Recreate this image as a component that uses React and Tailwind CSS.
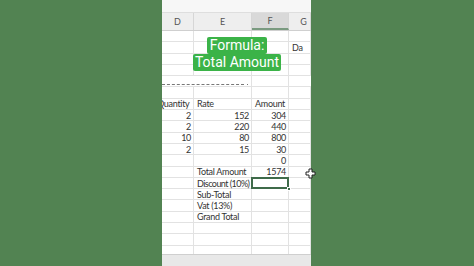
import React from "react";

const cols = [
  { key: "D", w: "w-[32px]" },
  { key: "E", w: "w-[58px]" },
  { key: "F", w: "w-[37px]" },
  { key: "G", w: "w-[22px]" },
];

// each row: [D, E, F, G] with alignment info
const rows = [
  [null, null, null, null],
  [null, null, null, { t: "Da", a: "left" }],
  [null, null, null, null],
  [null, null, null, null],
  "dashed",
  [null, null, null, null],
  [{ t: "Quantity", a: "cut" }, { t: "Rate", a: "left" }, { t: "Amount", a: "left" }, null],
  [{ t: "2" }, { t: "152" }, { t: "304" }, null],
  [{ t: "2" }, { t: "220" }, { t: "440" }, null],
  [{ t: "10" }, { t: "80" }, { t: "800" }, null],
  [{ t: "2" }, { t: "15" }, { t: "30" }, null],
  [null, null, { t: "0" }, null],
  [null, { t: "Total Amount", a: "left" }, { t: "1574" }, null],
  [null, { t: "Discount (10%)", a: "tight" }, "selected", null],
  [null, { t: "Sub-Total", a: "left" }, null, null],
  [null, { t: "Vat (13%)", a: "left" }, null, null],
  [null, { t: "Grand Total", a: "left" }, null, null],
  [null, null, null, null],
  [null, null, null, null],
  [null, null, null, null],
  [null, null, null, null],
];

function Cell({ col, value }) {
  if (value === "selected") {
    return (
      <div className={`${col.w} relative h-full shrink-0 border-r border-[#e2e2e2]`}>
        <div className="absolute -left-px -top-px right-[-1px] bottom-[-1px] border-2 border-[#3f6b4a]" />
        <div className="absolute right-[-3px] bottom-[-3px] h-[4px] w-[4px] bg-[#3f6b4a] border border-white" />
      </div>
    );
  }
  let cls = "justify-end pr-[2px]";
  if (value && value.a === "left") cls = "justify-start pl-[3px]";
  if (value && value.a === "tight") cls = "justify-start pl-[3px] tracking-[-0.55px]";
  if (value && value.a === "cut") cls = "justify-start";
  return (
    <div className={`${col.w} flex h-full shrink-0 items-center whitespace-nowrap border-r border-[#e2e2e2] ${cls}`}>
      {value && value.a === "cut" ? <span className="ml-[-5px]">{value.t}</span> : value ? value.t : ""}
    </div>
  );
}

export default function App() {
  return (
    <div className="relative flex h-[266px] w-[474px] overflow-hidden bg-[#528352] pl-[162px]" style={{ fontFamily: "Lato, 'Open Sans', sans-serif" }}>
      <div className="flex h-full w-[149px] flex-col overflow-hidden bg-white">
        <div className="h-[13px] shrink-0 border-b border-[#dedede] bg-[#f7f7f7]" />
        <div className="flex h-[18px] shrink-0 border-b border-[#cfcfcf] bg-[#eeeeee] text-[9px] text-[#555]">
          {cols.map((c) => (
            <div
              key={c.key}
              className={`${c.w} flex shrink-0 items-center justify-center border-r border-[#d6d6d6] ${c.key === "F" ? "border-b-2 border-b-[#7a9a80] bg-[#d9d9d9]" : ""} ${c.key === "G" ? "pl-[8px]" : ""}`}
            >
              {c.key}
            </div>
          ))}
        </div>
        <div className="flex-1 overflow-hidden text-[9px] leading-none tracking-[-0.3px] text-[#333]">
          {rows.map((r, i) =>
            r === "dashed" ? (
              <div key={i} className="flex h-[11.3px] border-b border-[#e2e2e2]">
                <div className="flex w-[90px] shrink-0 items-end border-r border-[#e2e2e2] pb-[1px]">
                  <div className="w-[82px] border-t border-dashed border-[#777]" />
                  <div className="ml-[3px] h-px w-px bg-[#777]" />
                </div>
                <div className="w-[37px] shrink-0 border-r border-[#e2e2e2]" />
              </div>
            ) : (
              <div key={i} className="flex h-[11.3px] border-b border-[#e2e2e2]">
                {cols.map((c, j) => (
                  <Cell key={c.key} col={c} value={r[j]} />
                ))}
              </div>
            )
          )}
        </div>
        <div className="h-[12px] shrink-0 border-t border-[#cfcfcf] bg-[#e8e8e8]" />
      </div>

      <div className="absolute left-[187px] top-[37px] flex w-[100px] flex-col items-center whitespace-nowrap text-[14px] leading-[17px] text-white" style={{ fontFamily: "Roboto, 'Liberation Sans', sans-serif" }}>
        <div className="rounded-[2px] bg-[#3bb348] px-[3px]">Formula:</div>
        <div className="rounded-[2px] bg-[#3bb348] px-[2px]">Total Amount</div>
      </div>

      <svg className="absolute left-[305px] top-[168px]" width="11" height="11" viewBox="0 0 11 11">
        <path d="M4 1h3v3h3v3H7v3H4V7H1V4h3z" fill="white" stroke="#222" strokeWidth="1" />
      </svg>
    </div>
  );
}
